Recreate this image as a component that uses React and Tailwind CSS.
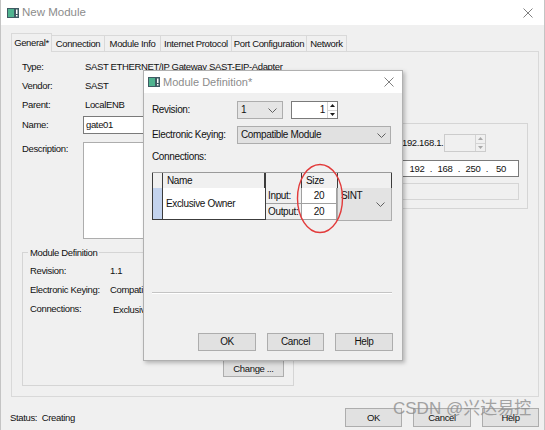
// Diálogo "New Module" con la ventana modal "Module Definition*" encima.
const ui = "font-['Liberation_Sans',Arial,sans-serif]"

function AppIcon() {
  return (
    <svg width="12" height="10" viewBox="0 0 12 10" className="shrink-0">
      <rect x="0" y="0" width="12" height="10" fill="#3f5a63" />
      <rect x="1" y="1" width="6" height="8" fill="#4fb38f" />
      <rect x="9" y="1.5" width="1.5" height="4.5" fill="#ffffff" />
      <rect x="9" y="7" width="1.5" height="1.5" fill="#ffffff" />
    </svg>
  )
}

function CloseX() {
  return (
    <svg width="10" height="10" viewBox="0 0 10 10">
      <path d="M0.5 0.5L9.5 9.5M9.5 0.5L0.5 9.5" stroke="#808080" strokeWidth="1" />
    </svg>
  )
}

function Chevron() {
  return (
    <svg width="9" height="5" viewBox="0 0 9 5">
      <polyline points="0.5,0.5 4.5,4.5 8.5,0.5" fill="none" stroke="#606060" strokeWidth="1" />
    </svg>
  )
}

function SpinArrows({ dim }) {
  const c = dim ? '#a8a8a8' : '#1a1a1a'
  return (
    <div className="flex w-[10px] flex-col border-l border-[#d4d4d4]">
      <div className="flex flex-1 items-center justify-center">
        <svg width="5" height="3" viewBox="0 0 5 3"><polygon points="0,3 2.5,0 5,3" fill={c} /></svg>
      </div>
      <div className="h-px bg-[#d4d4d4]" />
      <div className="flex flex-1 items-center justify-center">
        <svg width="5" height="3" viewBox="0 0 5 3"><polygon points="0,0 2.5,3 5,0" fill={c} /></svg>
      </div>
    </div>
  )
}

function Btn({ size, children }) {
  return (
    <div className={`flex items-center justify-center border border-[#adadad] bg-[#e1e1e1] ${size}`}>
      {children}
    </div>
  )
}

const tabs = [
  ['General*', 'w-[41px]'],
  ['Connection', 'w-[53px]'],
  ['Module Info', 'w-[56px]'],
  ['Internet Protocol', 'w-[71px]'],
  ['Port Configuration', 'w-[75px]'],
  ['Network', 'w-[40px]'],
]

function Row({ label, children }) {
  return (
    <div className="flex h-[19px] items-center">
      <span className="w-[61px] shrink-0">{label}</span>
      {children}
    </div>
  )
}

function ModuleDefinitionDialog() {
  return (
    <div className="absolute left-[142px] top-[70px] flex h-[291px] w-[260px] flex-col border border-[#b0b0b0] bg-[#f0f0f0] text-[10px] shadow-[2px_2px_4px_rgba(0,0,0,0.25)]">
      {/* barra de título */}
      <div className="flex h-[22px] shrink-0 items-center bg-white pl-[4px] pr-[8px]">
        <AppIcon />
        <span className="ml-[3px] text-[11px] tracking-normal text-[#8c8c8c]">Module Definition*</span>
        <span className="ml-auto flex"><CloseX /></span>
      </div>

      <div className="flex flex-col pl-[8px]">
        <div className="mt-[8px] flex h-[18px] items-center">
          <span className="w-[85px] shrink-0">Revision:</span>
          <div className="flex h-[18px] w-[46px] items-center justify-between border border-[#adadad] bg-[#e5e5e5] pl-[3px] pr-[5px]">
            <span>1</span>
            <Chevron />
          </div>
          <div className="ml-[8px] flex h-[18px] w-[47px] border border-[#7a7a7a] bg-white">
            <span className="flex flex-1 items-center justify-end pr-[2px]">1</span>
            <SpinArrows />
          </div>
        </div>

        <div className="mt-[7px] flex h-[18px] items-center">
          <span className="w-[85px] shrink-0">Electronic Keying:</span>
          <div className="flex h-[18px] w-[154px] items-center justify-between border border-[#adadad] bg-[#e1e1e1] pl-[3px] pr-[4px]">
            <span>Compatible Module</span>
            <Chevron />
          </div>
        </div>

        <div className="mt-[6px] flex h-[14px] items-center">Connections:</div>

        {/* tabla de conexiones */}
        <div className="mt-[8px] flex w-[240px] flex-col">
          <div className="flex h-[16px] border-t border-[#9a9a9a] bg-[#f0f0f0]">
            <div className="w-[11px] border-x border-[#3c3c3c]" />
            <div className="flex w-[103px] items-center border-r-2 border-[#3c3c3c] pl-[4px]">Name</div>
            <div className="w-[36px] border-r border-[#3c3c3c]" />
            <div className="flex w-[35px] items-center pl-[4px]">Size</div>
            <div className="flex-1 border-x border-[#3c3c3c]" />
          </div>
          <div className="flex h-[33px]">
            <div className="h-[32px] w-[11px] border-x border-b border-[#3c3c3c] bg-[#c3d3ee]" />
            <div className="flex h-[32px] w-[103px] items-center border-b border-r border-[#3c3c3c] bg-white pl-[3px]">
              Exclusive Owner
            </div>
            <div className="grid h-[32px] w-[71px] grid-cols-[36px_35px] grid-rows-2">
              <div className="flex items-center border-b border-r border-[#a0a0a0] bg-[#f0f0f0] pl-[2px]">Input:</div>
              <div className="flex items-center justify-center border-b border-r border-[#a0a0a0] bg-white">20</div>
              <div className="flex items-center border-b border-r border-[#a0a0a0] bg-[#f0f0f0] pl-[2px]">Output:</div>
              <div className="flex items-center justify-center border-b border-r border-[#a0a0a0] bg-white">20</div>
            </div>
            <div className="relative flex-1 border border-t-0 border-[#adadad] bg-[#e3e3e3]">
              <span className="absolute left-[3px] top-[3px]">SINT</span>
              <span className="absolute right-[6px] top-[14px] flex"><Chevron /></span>
            </div>
          </div>
        </div>

        <div className="mt-[71px] w-[240px] border-t border-b border-t-[#c4c4c4] border-b-white" />

        <div className="mt-[39px] flex justify-end gap-[11px] pr-[9px]">
          <Btn size="h-[18px] w-[58px]">OK</Btn>
          <Btn size="h-[18px] w-[57px]">Cancel</Btn>
          <Btn size="h-[18px] w-[58px]">Help</Btn>
        </div>
      </div>
    </div>
  )
}

export default function App() {
  return (
    <div className={`relative h-[430px] w-[545px] overflow-hidden whitespace-nowrap border-x border-[#c4c4c4] bg-[#f0f0f0] text-[9.5px] leading-none tracking-[-0.35px] text-[#111] ${ui}`}>
      {/* barra de título */}
      <div className="flex h-[25px] items-center bg-white pl-[6px] pr-[11px]">
        <AppIcon />
        <span className="ml-[3px] text-[11.5px] tracking-normal text-[#8c8c8c]">New Module</span>
        <span className="ml-auto flex"><CloseX /></span>
      </div>

      {/* pestañas */}
      <div className="ml-[10px] mt-[8px] flex h-[18px] items-end">
        {tabs.map(([t, w], i) => (
          <div
            key={t}
            className={
              i === 0
                ? `relative z-10 -mb-px flex h-[19px] items-center justify-center border border-b-0 border-[#d9d9d9] bg-[#f0f0f0] ${w}`
                : `flex h-[16px] items-center justify-center border border-b-0 border-l-0 border-[#d9d9d9] bg-[#f0f0f0] ${w}`
            }
          >
            {t}
          </div>
        ))}
      </div>

      {/* página General */}
      <div className="ml-[10px] flex h-[346px] w-[528px] border border-[#d9d9d9] bg-[#f0f0f0]">
        <div className="flex w-[293px] shrink-0 flex-col pl-[10px] pt-[5px]">
          <Row label="Type:"><span className="pl-[2px]">SAST ETHERNET/IP Gateway SAST-EIP-Adapter</span></Row>
          <Row label="Vendor:"><span className="pl-[2px]">SAST</span></Row>
          <Row label="Parent:"><span className="pl-[2px]">LocalENB</span></Row>
          <div className="mt-[2px] flex h-[18px] items-center">
            <span className="w-[61px] shrink-0">Name:</span>
            <div className="flex h-[18px] w-[200px] items-center border border-[#7a7a7a] bg-white pl-[2px]">gate01</div>
          </div>
          <div className="mt-[8px] flex h-[97px]">
            <span className="w-[61px] shrink-0 pt-[2px]">Description:</span>
            <div className="h-[97px] w-[200px] border border-[#adadad] bg-white" />
          </div>

          <fieldset className="mt-[7px] h-[140px] w-[272px] border border-[#d5d5d5]">
            <legend className="ml-[5px] px-[2px] leading-[13px]">Module Definition</legend>
            <div className="mt-[2px] flex flex-col pl-[7px]">
              <div className="flex h-[19px] items-center"><span className="w-[80px]">Revision:</span><span>1.1</span></div>
              <div className="flex h-[19px] items-center"><span className="w-[80px]">Electronic Keying:</span><span>Compatible Module</span></div>
              <div className="flex h-[19px] items-center"><span className="w-[80px]">Connections:</span><span className="pl-[3px] pt-[3px]">Exclusive Owner</span></div>
              <div className="mt-[42px] flex justify-end pr-[9px]">
                <Btn size="h-[17px] w-[61px]">Change ...</Btn>
              </div>
            </div>
          </fieldset>
        </div>

        <div className="w-[223px] shrink-0 pt-[71px]">
          <div className="flex h-[86px] flex-col border border-[#d5d5d5]">
            <div className="mt-[10px] flex h-[18px] items-center pl-[96px]">
              <span className="w-[42px] shrink-0">192.168.1.</span>
              <div className="flex h-[18px] w-[42px] border border-[#cccccc] bg-[#f0f0f0]">
                <span className="flex-1" />
                <SpinArrows dim />
              </div>
            </div>
            <div className="ml-[92px] mt-[8px] flex h-[17px] w-[121px] items-center border border-[#7a7a7a] bg-white pl-[7px]">
              <span className="w-[22px] text-center">192</span>
              <span className="w-[6px] text-center">.</span>
              <span className="w-[22px] text-center">168</span>
              <span className="w-[6px] text-center">.</span>
              <span className="w-[22px] text-center">250</span>
              <span className="w-[6px] text-center">.</span>
              <span className="w-[22px] text-center">50</span>
            </div>
            <div className="ml-[92px] mt-[6px] h-[17px] w-[121px] border border-[#d5d5d5] bg-[#f0f0f0]" />
          </div>
        </div>
      </div>

      {/* estado y botones */}
      <div className="mt-[11px] flex h-[19px] items-center pl-[9px] pr-[5px]">
        <span>Status:&nbsp;&nbsp;Creating</span>
        <div className="ml-auto flex gap-[11px]">
          <Btn size="h-[19px] w-[57px]">OK</Btn>
          <Btn size="h-[19px] w-[58px]">Cancel</Btn>
          <Btn size="h-[19px] w-[57px]">Help</Btn>
        </div>
      </div>

      <ModuleDefinitionDialog />

      {/* marca roja alrededor de la columna Size */}
      <svg className="absolute left-[295px] top-[163px]" width="48" height="71" viewBox="0 0 48 71">
        <ellipse cx="24" cy="35.5" rx="22.5" ry="34" fill="none" stroke="#e23a3a" strokeWidth="1.4" />
      </svg>

      {/* marca de agua */}
      <div className="pointer-events-none absolute left-[392px] top-[400px] font-['Liberation_Sans','Noto_Sans_CJK_SC',sans-serif] text-[17px] leading-none tracking-normal text-[#8f8f8f] opacity-80">
        CSDN @兴达易控
      </div>
    </div>
  )
}
